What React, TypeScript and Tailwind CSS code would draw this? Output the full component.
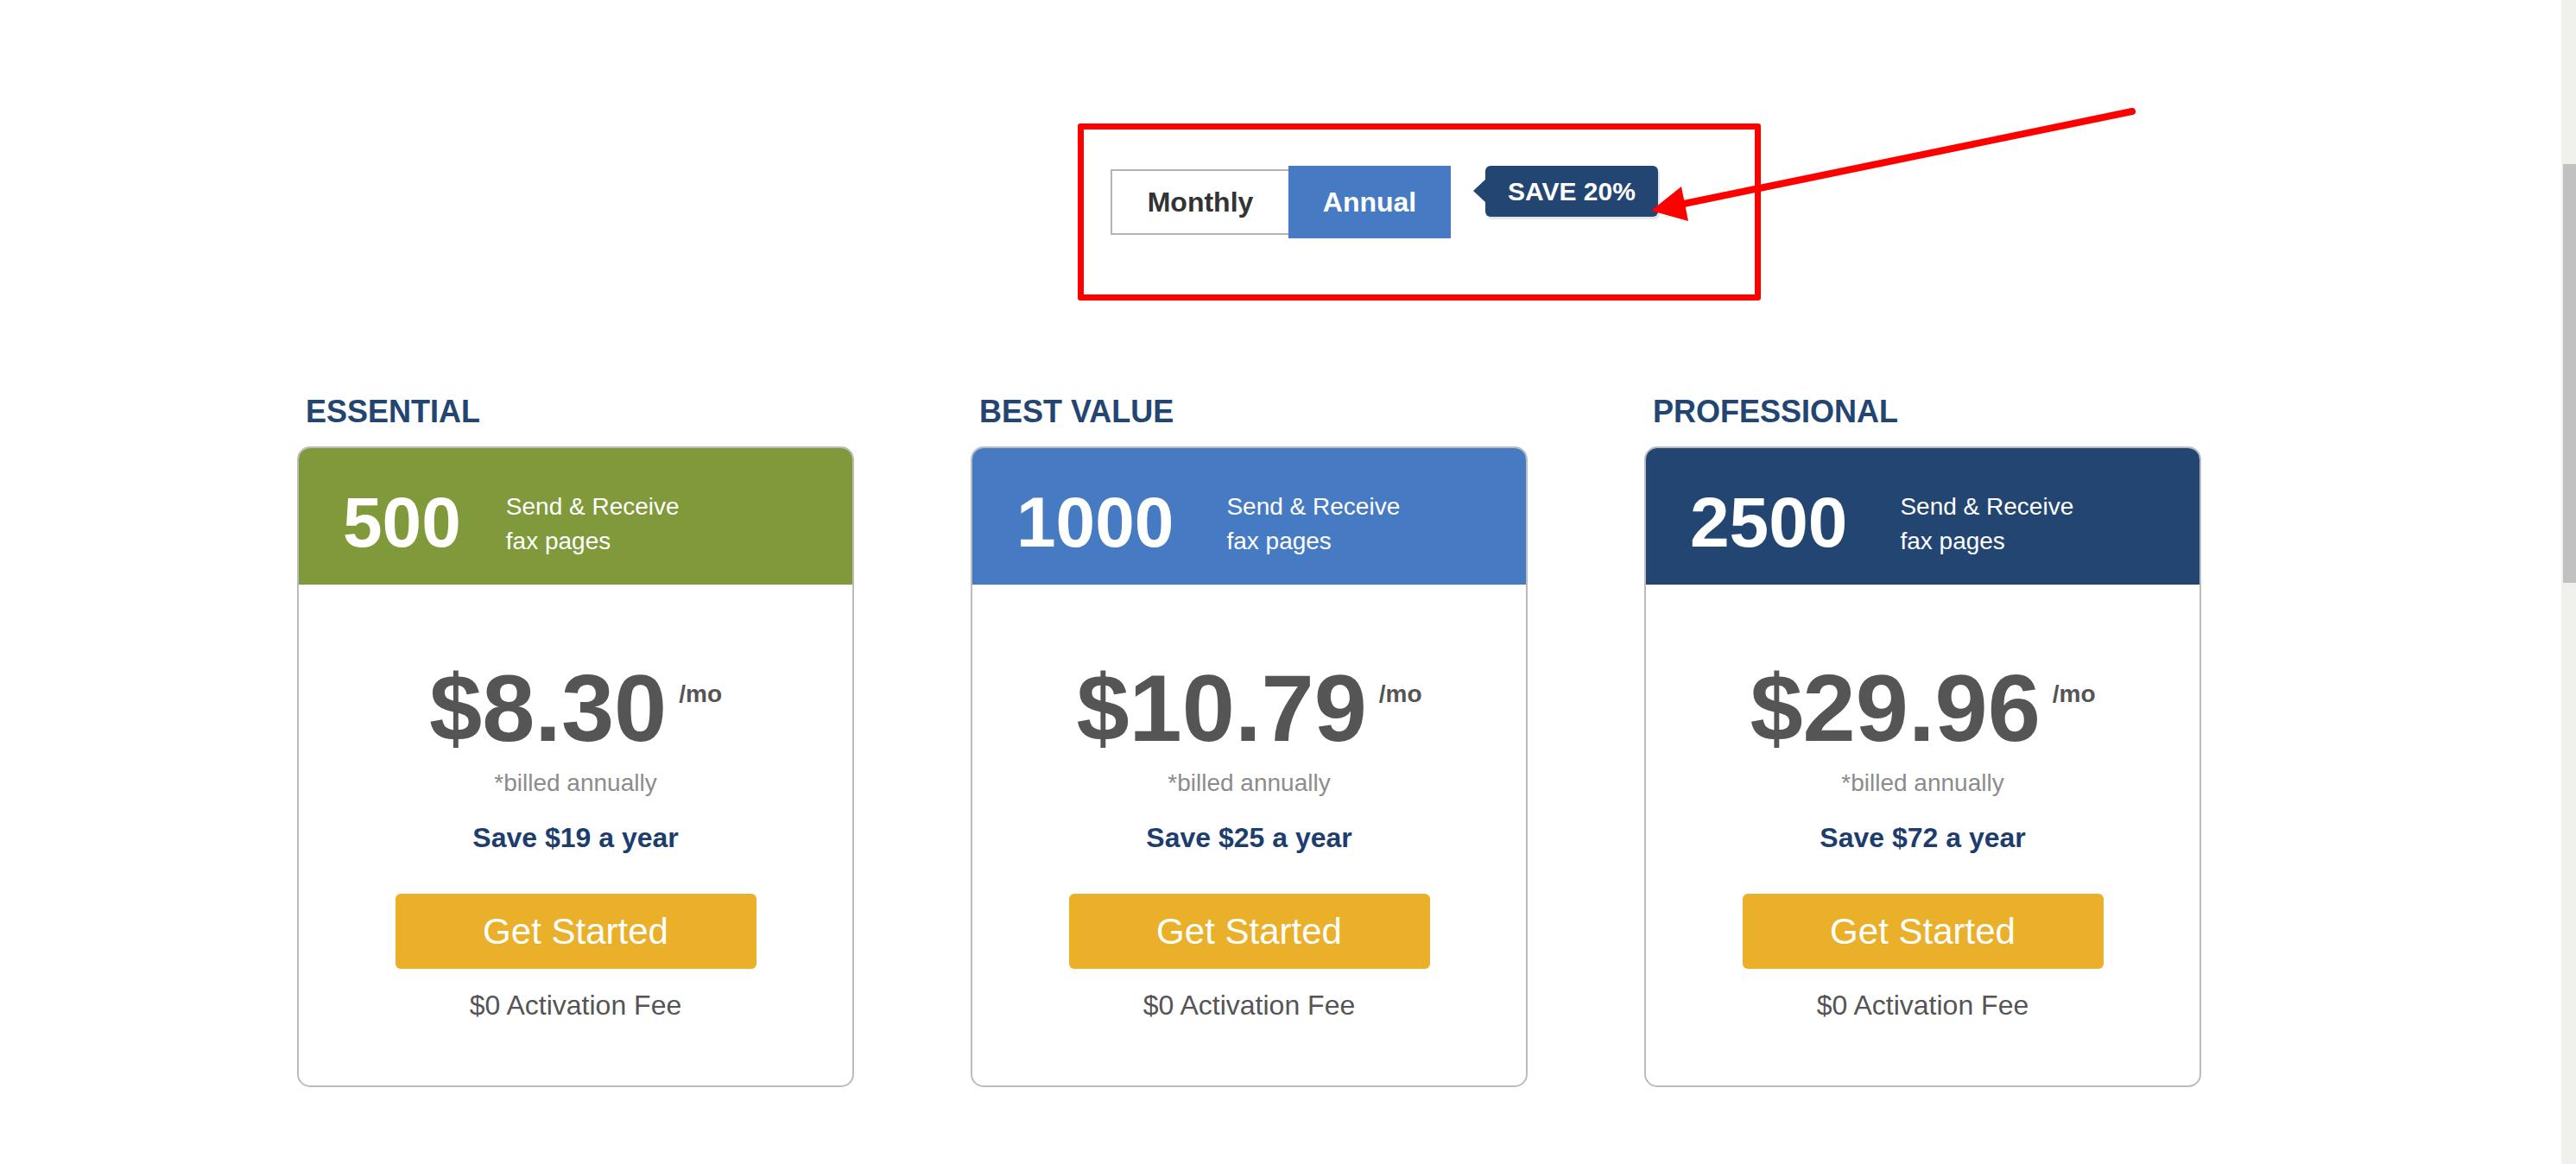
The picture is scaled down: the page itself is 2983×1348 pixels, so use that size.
import React from "react";

type Plan = {
  title: string;
  pages: string;
  headerBg: string;
  gap: string;
  price: string;
  save: string;
};

const plans: Plan[] = [
  { title: "ESSENTIAL", pages: "500", headerBg: "bg-[#7f993b]", gap: "gap-[52px]", price: "$8.30", save: "Save $19 a year" },
  { title: "BEST VALUE", pages: "1000", headerBg: "bg-[#467bc4]", gap: "gap-[61px]", price: "$10.79", save: "Save $25 a year" },
  { title: "PROFESSIONAL", pages: "2500", headerBg: "bg-[#234572]", gap: "gap-[61px]", price: "$29.96", save: "Save $72 a year" },
];

function PlanCard({ plan }: { plan: Plan }) {
  return (
    <div className="flex flex-col w-[645px]">
      <h2 className="pl-[10px] text-[36px] leading-[41px] font-bold text-[#234572]">{plan.title}</h2>

      <div className="mt-[20px] h-[742px] border-2 border-[#bcbcbc] rounded-[15px] overflow-hidden flex flex-col">
        {/* Header band */}
        <div className={`${plan.headerBg} h-[158px] pt-[14px] pl-[51px] flex items-center ${plan.gap} text-white`}>
          <span className="text-[82px] leading-none font-bold">{plan.pages}</span>
          <div className="text-[28px] leading-[40px] pt-[4px]">
            <div>Send &amp; Receive</div>
            <div>fax pages</div>
          </div>
        </div>

        {/* Body */}
        <div className="flex flex-col items-center pt-[88px]">
          <div className="flex items-start gap-[14px]">
            <span className="text-[110px] leading-none font-bold text-[#555555]">{plan.price}</span>
            <span className="mt-[25px] text-[28px] leading-none font-bold text-[#555555]">/mo</span>
          </div>
          <p className="mt-[15px] text-[28px] leading-[34px] text-[#8c8c8c]">*billed annually</p>
          <p className="mt-[27px] text-[32px] leading-[38px] font-bold text-[#1e3d6f]">{plan.save}</p>
          <button className="mt-[46px] w-[418px] h-[87px] rounded-[6px] bg-[#eab02a] text-white text-[42px] leading-none">
            Get Started
          </button>
          <p className="mt-[23px] text-[32px] leading-[38px] text-[#555555]">$0 Activation Fee</p>
        </div>
      </div>
    </div>
  );
}

export default function App() {
  return (
    <div className="flex h-[1348px] w-full overflow-hidden bg-white font-['Liberation_Sans',Arial,sans-serif]">
      <main className="relative flex-1 flex flex-col">
        {/* Billing toggle */}
        <div className="pt-[192px] flex justify-center">
          <div className="relative flex items-center">
            <button className="w-[206px] h-[76px] border-2 border-r-0 border-[#b3b3b3] bg-white text-[32px] font-bold text-[#333333]">
              Monthly
            </button>
            <button className="w-[188px] h-[84px] bg-[#467bc4] text-[32px] font-bold text-white">
              Annual
            </button>
            <div className="absolute left-full top-0 ml-[40px] h-[59px] px-[26px] flex items-center rounded-[6px] bg-[#234572] text-white text-[30px] font-bold whitespace-nowrap shadow-[2px_3px_0_#e6e6e6]">
              <span className="absolute -left-[14px] top-[15px] w-0 h-0 border-y-[14px] border-y-transparent border-r-[15px] border-r-[#234572]" />
              SAVE 20%
            </div>
          </div>
        </div>

        {/* Plans */}
        <div className="mt-[180px] pl-[344px] flex gap-[135px]">
          {plans.map((p) => (
            <PlanCard key={p.title} plan={p} />
          ))}
        </div>

        {/* Annotation: red box + arrow */}
        <div className="absolute left-[1248px] top-[143px] w-[791px] h-[205px] border-[7px] border-[#ff0000] rounded-[3px] pointer-events-none" />
        <svg className="absolute left-0 top-0 pointer-events-none" width="2966" height="1348">
          <line x1="2469" y1="129" x2="1945" y2="237" stroke="#ff0000" strokeWidth="8" strokeLinecap="round" />
          <polygon points="1912,244 1955,256 1947,216" fill="#ff0000" />
        </svg>
      </main>

      {/* Scrollbar */}
      <div className="w-[17px] bg-[#f0f0ec] flex flex-col pl-[2px]">
        <div className="mt-[190px] h-[485px] bg-[#c1c1c1]" />
      </div>
    </div>
  );
}
